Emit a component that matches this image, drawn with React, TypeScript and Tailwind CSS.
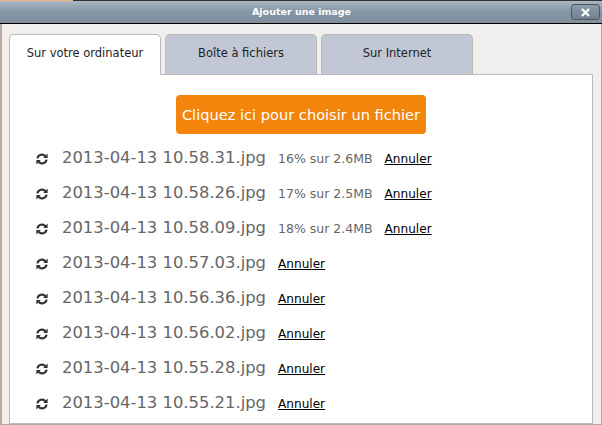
const uploads = [
  { name: '2013-04-13 10.58.31.jpg', progress: '16% sur 2.6MB' },
  { name: '2013-04-13 10.58.26.jpg', progress: '17% sur 2.5MB' },
  { name: '2013-04-13 10.58.09.jpg', progress: '18% sur 2.4MB' },
  { name: '2013-04-13 10.57.03.jpg' },
  { name: '2013-04-13 10.56.36.jpg' },
  { name: '2013-04-13 10.56.02.jpg' },
  { name: '2013-04-13 10.55.28.jpg' },
  { name: '2013-04-13 10.55.21.jpg' },
];

const tabs = ['Sur votre ordinateur', 'Boîte à fichiers', 'Sur Internet'];

function SpinnerIcon() {
  return (
    <svg viewBox="0 0 12 12" className="h-3 w-3 shrink-0" fill="none" stroke="#333" strokeWidth="2.2">
      <path d="M1.4 5.4 A4.6 4.6 0 0 1 9.4 3.2" />
      <path d="M10.6 6.6 A4.6 4.6 0 0 1 2.6 8.8" />
      <path d="M11.6 0.6 V5 H7.2 Z" fill="#333" stroke="none" />
      <path d="M0.4 11.4 V7 H4.8 Z" fill="#333" stroke="none" />
    </svg>
  );
}

export default function App() {
  return (
    <div className="flex h-[425px] w-[602px] flex-col overflow-hidden bg-[#f0efed] font-['DejaVu_Sans',sans-serif]">
      <div className="flex h-px shrink-0">
        <div className="w-[73px] bg-[#e8b48c]" />
        <div className="flex-1 bg-[#333]" />
      </div>
      <div className="flex h-[23px] shrink-0 items-center border-b border-b-black bg-gradient-to-b from-[#abb7c2] via-[#8595a3] to-[#7f8f9e] pl-[2px] pr-[2px]">
        <span className="flex-1 pl-[30px] text-center text-[9.5px] font-bold text-white">Ajouter une image</span>
        <button type="button" className="flex h-[16px] w-[29px] items-center justify-center rounded-[3px] border border-[#4d5a66] bg-gradient-to-b from-[#8f9daa] to-[#6f7f8e]">
          <svg viewBox="0 0 10 10" className="h-[9px] w-[9px]" stroke="white" strokeWidth="2.4">
            <path d="M1 1 L9 9 M9 1 L1 9" />
          </svg>
        </button>
      </div>

      <div className="flex flex-1 flex-col border-b border-l-2 border-r border-b-[#b5a99e] border-l-[#b9a99c] border-r-[#b5a99e] pl-[7px] pr-[8px] pt-[10px]">
        <div className="relative z-10 flex h-[40px] shrink-0 gap-[4px]">
          {tabs.map((tab, i) => (
            <div
              key={tab}
              className={
                i === 0
                  ? 'flex h-[41px] w-[152px] items-center justify-center rounded-t-[5px] border border-b-0 border-[#b9b9b9] bg-white pb-[3px] text-[11.5px] text-[#222]'
                  : 'flex h-[40px] w-[152px] items-center justify-center rounded-t-[5px] border border-b-0 border-[#b9b9b9] bg-[#c1c7d4] pb-[2px] text-[11.5px] text-[#222]'
              }
            >
              {tab}
            </div>
          ))}
        </div>

        <div className="flex flex-1 flex-col border border-[#b9b9b9] bg-white pl-[26px]">
          <button type="button" className="ml-[140px] mt-[20px] flex h-[39px] w-[250px] shrink-0 items-center justify-center rounded-[4px] bg-[#f3850c] pt-[1px] text-[14.6px] text-white">
            Cliquez ici pour choisir un fichier
          </button>

          <ul className="mt-[7px] flex flex-col">
            {uploads.map((file) => (
              <li key={file.name} className="flex h-[35px] items-center">
                <SpinnerIcon />
                <span className="ml-[14px] text-[16.4px] text-[#666]">{file.name}</span>
                {file.progress && <span className="ml-[12px] mt-[1px] text-[12.5px] text-[#666]">{file.progress}</span>}
                <a href="#" className="ml-[12px] mt-[1px] text-[12.1px] text-black underline">Annuler</a>
              </li>
            ))}
          </ul>
        </div>
      </div>
    </div>
  );
}
